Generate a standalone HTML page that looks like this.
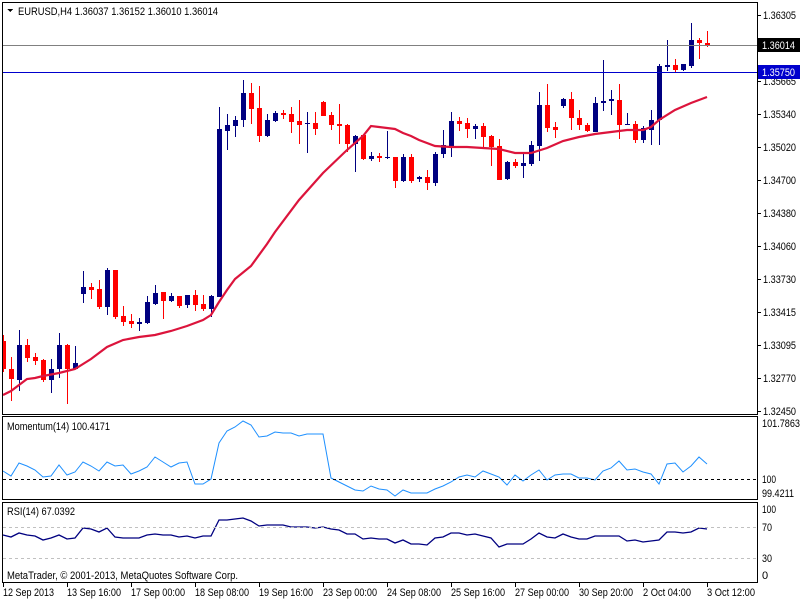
<!DOCTYPE html>
<html><head><meta charset="utf-8"><style>
body{margin:0;background:#fff;width:800px;height:600px;overflow:hidden;font-family:"Liberation Sans",sans-serif}
svg text{font-family:"Liberation Sans",sans-serif;font-size:11px;fill:#000}
</style></head><body>
<svg id="s" width="800" height="600" xmlns="http://www.w3.org/2000/svg" shape-rendering="crispEdges">
<rect x="0" y="0" width="800" height="600" fill="#fff"/>
<g id="g"></g>
<rect x="2.5" y="2.5" width="755" height="412" fill="none" stroke="#000"/>
<rect x="2.5" y="416.5" width="755" height="83" fill="none" stroke="#000"/>
<rect x="2.5" y="502.5" width="755" height="80" fill="none" stroke="#000"/>
<line x1="3" y1="45.5" x2="757" y2="45.5" stroke="#808080"/>
<line x1="3" y1="72.5" x2="757" y2="72.5" stroke="#0000cd"/>
<line x1="3" y1="479.5" x2="757" y2="479.5" stroke="#000" stroke-dasharray="3,3"/>
<line x1="3" y1="527.5" x2="757" y2="527.5" stroke="#c0c0c0" stroke-dasharray="3,3"/>
<line x1="3" y1="558.5" x2="757" y2="558.5" stroke="#c0c0c0" stroke-dasharray="3,3"/>
<polygon points="7,9 13,9 10,12" fill="#000"/>
<text x="18" y="15" textLength="200" lengthAdjust="spacingAndGlyphs">EURUSD,H4  1.36037 1.36152 1.36010 1.36014</text>
<text x="7" y="430" textLength="103" lengthAdjust="spacingAndGlyphs">Momentum(14) 100.4171</text>
<text x="7" y="515" textLength="68" lengthAdjust="spacingAndGlyphs">RSI(14) 67.0392</text>
<text x="7" y="579" textLength="231" lengthAdjust="spacingAndGlyphs">MetaTrader, © 2001-2013, MetaQuotes Software Corp.</text>
<g id="ax">
<text x="763" y="19" textLength="33" lengthAdjust="spacingAndGlyphs">1.36305</text>
<text x="763" y="85" textLength="33" lengthAdjust="spacingAndGlyphs">1.35665</text>
<text x="763" y="118" textLength="33" lengthAdjust="spacingAndGlyphs">1.35340</text>
<text x="763" y="151" textLength="33" lengthAdjust="spacingAndGlyphs">1.35020</text>
<text x="763" y="184" textLength="33" lengthAdjust="spacingAndGlyphs">1.34700</text>
<text x="763" y="217" textLength="33" lengthAdjust="spacingAndGlyphs">1.34380</text>
<text x="763" y="250" textLength="33" lengthAdjust="spacingAndGlyphs">1.34060</text>
<text x="763" y="283" textLength="33" lengthAdjust="spacingAndGlyphs">1.33730</text>
<text x="763" y="316" textLength="33" lengthAdjust="spacingAndGlyphs">1.33415</text>
<text x="763" y="349" textLength="33" lengthAdjust="spacingAndGlyphs">1.33095</text>
<text x="763" y="382" textLength="33" lengthAdjust="spacingAndGlyphs">1.32770</text>
<text x="763" y="415" textLength="33" lengthAdjust="spacingAndGlyphs">1.32450</text>
<text x="762" y="427" textLength="38" lengthAdjust="spacingAndGlyphs">101.7863</text>
<text x="762" y="483" textLength="14" lengthAdjust="spacingAndGlyphs">100</text>
<text x="762" y="497" textLength="32" lengthAdjust="spacingAndGlyphs">99.4211</text>
<text x="762" y="513" textLength="14" lengthAdjust="spacingAndGlyphs">100</text>
<text x="762" y="531" textLength="10" lengthAdjust="spacingAndGlyphs">70</text>
<text x="762" y="562" textLength="10" lengthAdjust="spacingAndGlyphs">30</text>
<text x="762" y="579">0</text>
</g>
<rect x="758" y="38" width="42" height="14" fill="#000"/>
<text x="762" y="49" style="fill:#fff" textLength="33" lengthAdjust="spacingAndGlyphs">1.36014</text>
<rect x="758" y="65" width="42" height="14" fill="#0000cd"/>
<text x="762" y="76" style="fill:#fff" textLength="33" lengthAdjust="spacingAndGlyphs">1.35750</text>
<g id="bt">
<text x="3" y="596" textLength="51" lengthAdjust="spacingAndGlyphs">12 Sep 2013</text>
<text x="67" y="596" textLength="54" lengthAdjust="spacingAndGlyphs">13 Sep 16:00</text>
<text x="131" y="596" textLength="54" lengthAdjust="spacingAndGlyphs">17 Sep 00:00</text>
<text x="195" y="596" textLength="54" lengthAdjust="spacingAndGlyphs">18 Sep 08:00</text>
<text x="259" y="596" textLength="54" lengthAdjust="spacingAndGlyphs">19 Sep 16:00</text>
<text x="323" y="596" textLength="54" lengthAdjust="spacingAndGlyphs">23 Sep 00:00</text>
<text x="387" y="596" textLength="54" lengthAdjust="spacingAndGlyphs">24 Sep 08:00</text>
<text x="451" y="596" textLength="54" lengthAdjust="spacingAndGlyphs">25 Sep 16:00</text>
<text x="515" y="596" textLength="54" lengthAdjust="spacingAndGlyphs">27 Sep 00:00</text>
<text x="579" y="596" textLength="54" lengthAdjust="spacingAndGlyphs">30 Sep 20:00</text>
<text x="643" y="596" textLength="48" lengthAdjust="spacingAndGlyphs">2 Oct 04:00</text>
<text x="707" y="596" textLength="48" lengthAdjust="spacingAndGlyphs">3 Oct 12:00</text>
</g>
</svg>
<script>
var NS="http://www.w3.org/2000/svg",g=document.getElementById('g');
function el(t,a){var e=document.createElementNS(NS,t);for(var k in a)e.setAttribute(k,a[k]);g.appendChild(e);return e;}
var C=[[341,369,335,372,0],[369,379,357,401,0],[345,380,330,391,1],[345,358,339,362,0],[357,361,353,365,0],[360,380,359,382,0],[369,380,359,393,1],[345,369,333,378,1],[345,369,344,404,0],[363,369,346,369,1],
[287,294,271,303,1],[287,290,283,299,0],[289,307,280,309,0],[270,307,268,315,1],[270,317,270,319,0],[316,322,306,326,0],[321,324,314,328,0],[322,324,318,331,1],[302,323,296,324,1],[293,304,285,305,1],
[292,301,292,319,0],[296,301,293,302,1],[296,306,296,308,0],[295,305,295,308,1],[295,305,290,311,0],[304,309,295,311,0],[296,309,295,317,1],[129,297,107,297,1],[125,131,114,150,1],[120,126,116,137,1],
[93,120,80,127,1],[93,109,83,124,0],[108,136,86,142,0],[120,136,114,137,1],[113,121,111,122,1],[113,115,110,119,0],[114,122,107,133,0],[121,125,100,144,0],[123,124,112,153,1],[123,129,112,135,0],
[102,116,101,116,0],[115,125,112,130,0],[124,126,104,144,0],[125,144,124,152,0],[136,144,135,172,1],[135,159,135,160,0],[156,159,152,161,1],[156,158,153,162,0],[157,158,131,159,1],[157,181,157,188,0],
[157,181,154,182,1],[157,181,154,183,0],[177,179,176,182,1],[177,183,170,190,0],[154,183,152,186,1],[145,154,130,158,1],[121,146,112,157,1],[121,124,117,131,0],[123,129,118,138,0],[126,129,124,139,1],
[126,137,123,147,0],[136,147,135,166,0],[146,180,139,180,0],[162,179,161,180,1],[162,166,159,168,0],[163,166,152,178,1],[145,164,141,166,1],[105,146,92,161,1],[105,128,84,132,0],[127,130,122,138,0],
[99,106,98,108,1],[99,118,92,130,0],[118,125,110,130,0],[125,131,123,132,0],[103,132,97,132,1],[101,103,60,111,1],[99,101,90,115,1],[100,125,84,139,0],[124,125,113,125,1],[124,140,121,143,0],
[128,140,126,143,1],[120,130,110,145,1],[66,120,64,145,1],[65,67,40,71,1],[65,70,59,73,0],[64,70,64,71,1],[40,66,23,68,1],[40,43,38,59,0],[43,46,31,47,0]];
for(var i=0;i<C.length;i++){var c=C[i],x=3+8*i,col=c[4]?'#000080':'#ff0000';
el('rect',{x:x,y:c[2],width:1,height:Math.max(1,c[3]-c[2]),fill:col});
var bx=x-2,bw=5;if(bx<3){bw-=3-bx;bx=3;}
el('rect',{x:bx,y:c[0],width:bw,height:Math.max(1,c[1]-c[0]),fill:col});}
function pl(p,col,w){el('polyline',{points:p,fill:'none',stroke:col,'stroke-width':w,'shape-rendering':'auto'});}
pl("3,395 11,391 27,379 35,378 43,376 59,373 75,369 91,359 107,347 123,340 139,337 155,335 171,331 187,326 203,320 211,315 219,302 227,290 235,279 251,266 267,244 275,232 299,200 323,173 347,150 363,136 371,126 379,127 395,129 403,133 411,136 419,140 435,146 451,147 467,147 483,148 499,149 515,153 531,153 547,148 563,141 579,137 595,134 611,132 627,130 643,130 651,127 659,120 675,110 691,103 707,97","#dc143c",2.2);
pl("3,471 11,476 19,463 27,466 35,470 43,477 51,476 59,465 67,475 75,472 83,462 91,466 99,471 107,462 115,466 123,465 131,474 139,471 147,467 155,457 163,462 171,467 179,463 187,462 195,484 203,484 211,479 219,443 227,431 235,427 243,421 251,425 259,437 267,436 275,432 283,433 291,433 299,436 307,434 315,434 323,434 331,478 339,482 347,486 355,490 363,491 371,486 379,489 387,490 395,496 403,490 411,493 419,493 427,493 435,489 443,486 451,482 459,477 467,475 475,477 483,471 491,474 499,477 507,485 515,475 523,481 531,475 539,470 547,480 555,475 563,474 571,474 579,478 587,478 595,480 603,471 611,468 619,461 627,470 635,469 643,472 651,474 659,484 667,464 675,463 683,472 691,466 699,457 707,464","#1e90ff",1);
pl("3,535 11,537 19,533 27,535 35,536 43,540 51,538 59,535 67,539 75,538 83,528 91,529 99,532 107,528 115,537 123,538 131,538 139,538 147,535 155,534 163,535 171,535 179,537 187,536 195,538 203,536 211,536 219,520 227,520 235,519 243,518 251,521 259,526 267,525 275,525 283,525 291,527 299,527 307,527 315,528 323,527 331,529 339,530 347,534 355,534 363,539 371,538 379,539 387,539 395,543 403,540 411,544 419,544 427,545 435,538 443,537 451,533 459,533 467,535 475,534 483,536 491,538 499,547 507,544 515,544 523,544 531,539 539,533 547,537 555,538 563,534 571,537 579,539 587,539 595,536 603,536 611,536 619,536 627,541 635,540 643,542 651,541 659,540 667,532 675,532 683,533 691,532 699,528 707,529","#000080",1.3);
var ys=[15,81,114,147,180,213,246,279,312,345,378,411];
for(var j=0;j<ys.length;j++)el('rect',{x:758,y:ys[j],width:3,height:1,fill:'#000'});
for(var k=0;k<12;k++)el('rect',{x:3+64*k,y:583,width:1,height:4,fill:'#000'});
</script>
</body></html>
